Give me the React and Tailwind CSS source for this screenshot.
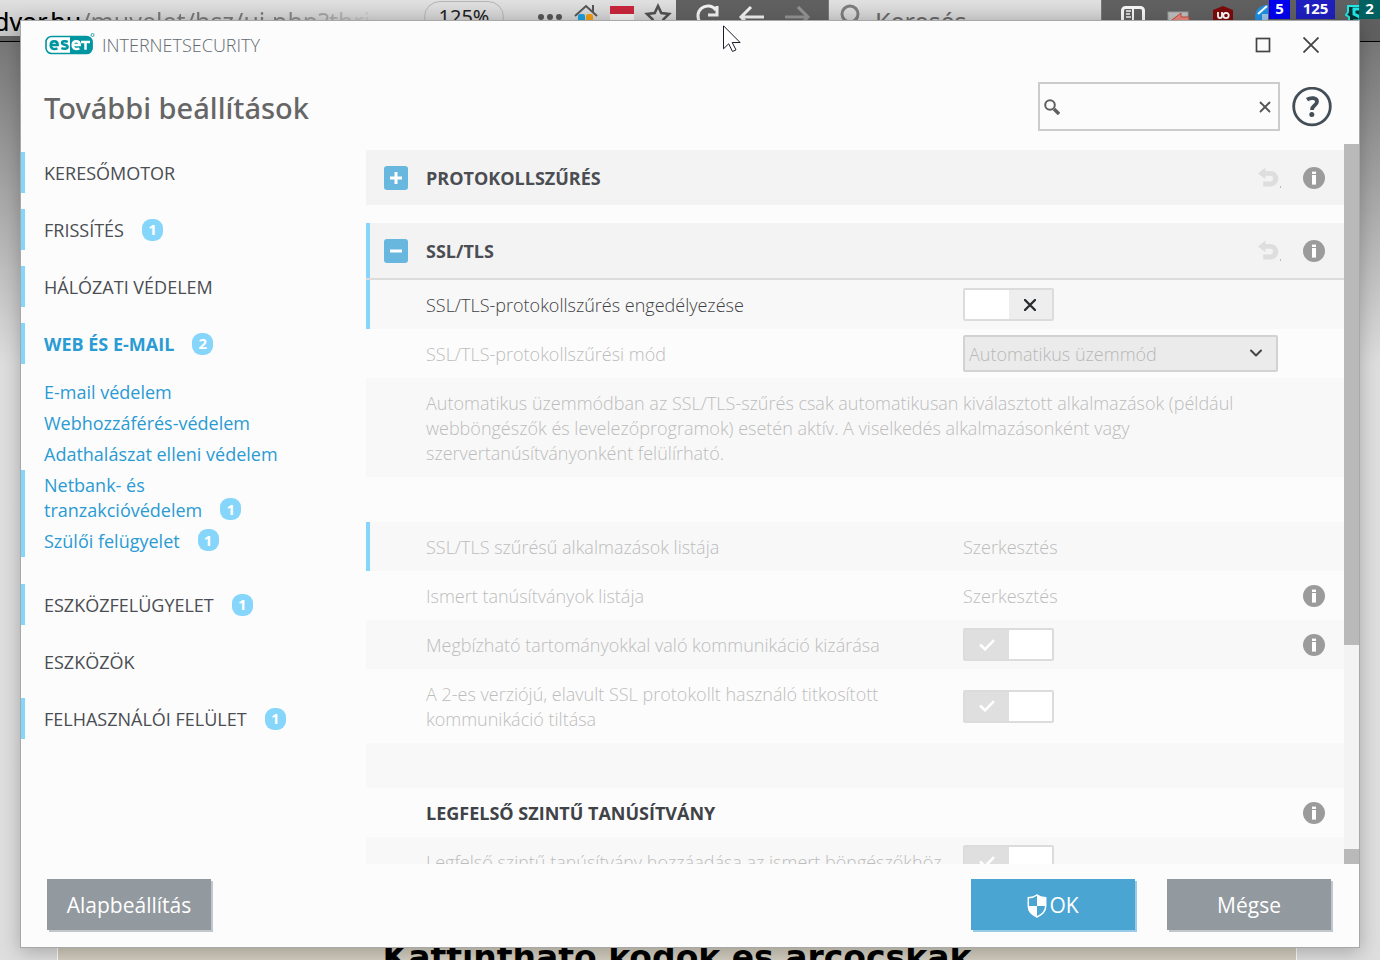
import { ChevronDown, X } from "lucide-react";

function CountBadge({ children }) {
  return (
    <span className="ml-[18px] flex h-[22px] w-[21px] shrink-0 items-center justify-center rounded-[9px] bg-[#86d5fb] text-[15px] font-bold text-white">
      {children}
    </span>
  );
}

function NavItem({ label, count, marked, active }) {
  return (
    <li
      className={`flex h-[41px] items-center border-l-4 pl-[19px] ${marked ? "border-[#86d5fb]" : "border-transparent"} ${active ? "mb-[13px]" : "mb-4"}`}
    >
      <a
        href="#"
        aria-current={active ? "page" : undefined}
        className={active ? "font-bold text-[#2a9bd3]" : "text-[#4a4d52]"}
      >
        {label}
      </a>
      {count && <CountBadge>{count}</CountBadge>}
    </li>
  );
}

function SubItem({ children, count, marked }) {
  return (
    <li
      className={`flex items-end border-l-4 py-[3px] pl-[19px] leading-[25px] text-[#2a9bd3] ${marked ? "border-[#86d5fb]" : "border-transparent"}`}
    >
      <a href="#">{children}</a>
      {count && (
        <span className="mb-[3px]">
          <CountBadge>{count}</CountBadge>
        </span>
      )}
    </li>
  );
}

function InfoButton() {
  return (
    <button type="button" aria-label="Információ" className="shrink-0">
      <svg viewBox="0 0 22 22" className="block size-[22px]">
        <circle cx="11" cy="11" r="11" fill="#9b9b9b" />
        <rect x="9" y="4.6" width="4" height="2.4" fill="#fff" />
        <rect x="9" y="8" width="4" height="9.6" fill="#fff" />
      </svg>
    </button>
  );
}

function UndoButton() {
  return (
    <button type="button" aria-label="Visszaállítás" className="shrink-0">
      <svg viewBox="0 0 23 22" className="block h-[22px] w-[23px]">
        <path d="M0 6.4 7.4.6v3.4h5.2a7.7 7.7 0 0 1 0 15.4H5.2v-5h7a2.7 2.7 0 0 0 0-5.6H7.4v3.4z" fill="#dedede" />
        <rect x="22" y="19" width="1" height="2" fill="#bbb" />
      </svg>
    </button>
  );
}

function SectionHeader({ title, open }) {
  return (
    <div
      className={`flex h-[55px] items-center border-l-4 bg-[#f3f3f3] pr-[19px] pl-3.5 ${open ? "border-[#86d5fb]" : "border-transparent"}`}
    >
      <button
        type="button"
        aria-expanded={!!open}
        aria-label={title}
        className="flex size-6 items-center justify-center rounded-[3px] bg-[#68b7df]"
      >
        <svg viewBox="0 0 12 12" className="size-3">
          <path d={open ? "M0 6h12" : "M0 6h12M6 0v12"} stroke="#fff" strokeWidth="3" />
        </svg>
      </button>
      <h2 className="ml-[18px] flex-1 font-bold text-[#4a4d52]">{title}</h2>
      <div className="flex items-center gap-[22px]">
        <UndoButton />
        <InfoButton />
      </div>
    </div>
  );
}

function Row({ children, shaded, marked, info, className = "" }) {
  return (
    <div
      className={`grid grid-cols-[minmax(0,1fr)_315px_66px] items-center border-l-4 pl-14 ${shaded ? "bg-[#f8f8f8]" : "bg-[#fcfcfc]"} ${marked ? "border-[#86d5fb]" : "border-transparent"} ${className}`}
    >
      {children}
      {info && (
        <div className="col-start-3 flex justify-end pr-[19px]">
          <InfoButton />
        </div>
      )}
    </div>
  );
}

function Toggle({ id, on, disabled }) {
  return (
    <label
      htmlFor={id}
      className="flex h-[33px] w-[91px] rounded-xs border-2 border-[#dcdcdc] bg-white"
    >
      <input id={id} type="checkbox" role="switch" defaultChecked={on} disabled={disabled} className="sr-only" />
      <span className={`flex flex-1 items-center justify-center ${on ? "bg-[#dfdfdf]" : "bg-white"}`}>
        {on && (
          <svg viewBox="0 0 16 12" className="h-3 w-4" fill="none" stroke="#fff" strokeWidth="2.6">
            <path d="M1 5.5 6 10.3 15 1.2" />
          </svg>
        )}
      </span>
      <span className={`flex flex-1 items-center justify-center ${on ? "bg-white" : "bg-[#eeeeee]"}`}>
        {!on && (
          <svg viewBox="0 0 12 12" className="size-3" fill="none" stroke="#2b2e31" strokeWidth="2.4" strokeLinecap="round">
            <path d="M1 1 11 11M11 1 1 11" />
          </svg>
        )}
      </span>
    </label>
  );
}

function ToggleRow({ id, children, on, disabled, className, ...row }) {
  return (
    <Row className={className} {...row}>
      <label htmlFor={id} className="pt-px pr-12 leading-[25px]">
        {children}
      </label>
      <Toggle id={id} on={on} disabled={disabled} />
    </Row>
  );
}

function EditRow({ children, ...row }) {
  return (
    <Row className="h-[49px] text-[#bcbcbc]" {...row}>
      <span>{children}</span>
      <a href="#" className="justify-self-start">
        Szerkesztés
      </a>
    </Row>
  );
}

function BrowserBackdrop() {
  return (
    <div aria-hidden="true" className="absolute inset-0 flex flex-col overflow-hidden bg-[#dedede]">
      <div className="flex h-[42px] shrink-0 items-start overflow-hidden border-b border-black bg-[#606060]">
        <div className="flex h-9 w-[676px] shrink-0 items-start bg-linear-to-b from-[#e0e0e0] to-[#c4c4c4] font-['Noto_Sans',sans-serif] text-[25px] leading-[42px] whitespace-nowrap">
          <div className="-ml-1.5 w-[430px] shrink-0 overflow-hidden bg-linear-to-r from-[#777777] from-65% to-transparent to-90% bg-clip-text text-transparent">
            <span className="text-black">dvor.hu</span>/muvelet/hsz/ui.php?thri
          </div>
          <span className="mt-px flex h-8 w-[80px] shrink-0 items-center justify-center rounded-full border border-[#b4b4b4] text-xl text-[#222222]">
            125%
          </span>
          <svg viewBox="0 0 140 36" className="ml-[33px] h-9 w-[140px] shrink-0">
            <g fill="#555">
              <circle cx="4" cy="17" r="3" />
              <circle cx="13" cy="17" r="3" />
              <circle cx="22" cy="17" r="3" />
            </g>
            <rect x="41" y="14" width="7" height="8" rx="2" fill="#1b9fdc" />
            <rect x="49" y="14" width="7" height="8" rx="2" fill="#f39c12" />
            <path d="M38 16 49 6l11 10M56 5v7" fill="none" stroke="#555" strokeWidth="2" />
            <rect x="73" y="6" width="24" height="8" fill="#c6263b" />
            <rect x="73" y="14" width="24" height="6" fill="#eee" />
            <rect x="73" y="20" width="24" height="8" fill="#477050" />
            <path
              d="m121 6 3.3 7 7.7 1-5.6 5.4 1.4 7.6-6.8-3.8-6.8 3.8 1.4-7.6-5.6-5.4 7.7-1z"
              fill="none"
              stroke="#505050"
              strokeWidth="2.6"
            />
          </svg>
        </div>
        <div className="w-[152px] shrink-0">
          <svg viewBox="0 0 152 36" className="h-9 w-[152px]" fill="none" stroke="#f0f0f0" strokeWidth="3">
            <path d="M39 23a10 10 0 1 1 1-13M41 6v9h-9" />
            <path d="M88 17H66M75 7 65 17l10 10" />
            <path d="M109 17h22M122 7l10 10-10 10" stroke="#939393" />
          </svg>
        </div>
        <div className="flex h-9 flex-1 items-start border-x border-[#777777] bg-linear-to-b from-[#e0e0e0] to-[#c4c4c4] font-['Noto_Sans',sans-serif] text-[25px] leading-[42px] text-[#666666]">
          <svg viewBox="0 0 24 36" className="ml-[9px] h-9 w-6" fill="none" stroke="#7c7c7c" strokeWidth="3">
            <circle cx="12" cy="14" r="8" />
            <path d="m18 20 5 6" />
          </svg>
          <span className="ml-[13px]">Keresés</span>
        </div>
        <div className="flex w-[278px] shrink-0 items-start font-['Noto_Sans',sans-serif] text-[15px] leading-4 font-bold text-white">
          <svg viewBox="0 0 166 36" className="h-9 w-[166px] shrink-0">
            <rect x="20.5" y="7.5" width="21" height="20" rx="3" fill="none" stroke="#f4f4f4" strokeWidth="3" />
            <path d="M31 8v20" stroke="#f4f4f4" strokeWidth="2" />
            <path d="M24 11h5M24 14h4M24 17h5" stroke="#f4f4f4" strokeWidth="1.6" />
            <rect x="66" y="12" width="20" height="14" fill="#bdbdbd" stroke="#9a9a9a" />
            <path d="m70 20 9-7v4h8v6h-8v4z" fill="#e9867a" stroke="#c44b3f" />
            <path d="m121 6 10 4v14l-10 8-10-8V10z" fill="#7c0a0a" />
            <path d="M116 12v4a2 2 0 0 0 4 0v-4" fill="none" stroke="#fff" strokeWidth="1.8" />
            <circle cx="124" cy="15.5" r="2.7" fill="none" stroke="#fff" strokeWidth="1.8" />
            <circle cx="165" cy="17" r="12" fill="#1d8fe0" />
            <path d="m156 14 9-8" stroke="#fff" strokeWidth="2" />
            <path d="M160 14h8v8h-8z" fill="#9cc6ea" />
          </svg>
          <span className="ml-px flex h-[19px] w-[21px] items-start justify-center bg-[#0000f0]">5</span>
          <span className="ml-1.5 flex h-[19px] w-[39px] items-start justify-center bg-[#1f1fbf]">125</span>
          <svg viewBox="0 0 24 32" className="ml-2.5 h-8 w-3.5" preserveAspectRatio="xMinYMin slice">
            <path d="M3 6h14v20H6l-2-3v-6l-3-2 2-3z" fill="#033" stroke="#20e6e6" strokeWidth="2" />
            <path d="M15 9H9v5l6 3v4H8" fill="none" stroke="#20e6e6" strokeWidth="3" />
          </svg>
          <span className="flex h-[19px] flex-1 items-start justify-center bg-[#006161]">2</span>
        </div>
      </div>
      <div className="flex flex-1 flex-col justify-end bg-linear-to-b from-[#777777] to-[#dedede] to-35% pr-[83px] pl-[57px]">
        <div className="h-4 border-x border-white bg-[#d3cec0] text-center font-['DejaVu_Sans',sans-serif] text-[33px] leading-7 font-bold whitespace-nowrap text-black">
          Kattintható kódok és arcocskák
        </div>
      </div>
    </div>
  );
}

function EsetLogo() {
  return (
    <svg viewBox="0 0 50 24" role="img" aria-label="ESET" className="h-6 w-[50px]">
      <rect x="1" y="3.5" width="46" height="17" rx="5.5" fill="#fff" stroke="#0096a1" strokeWidth="1.6" />
      <path d="M25 3.5h17A5.5 5.5 0 0 1 47.5 9v6a5.5 5.5 0 0 1-5.5 5.5H25z" fill="#0096a1" />
      <g fill="none" strokeWidth="2.5">
        <path d="M5.5 12h7.2c0-5-7-5-7 0 0 4.800 4.800 4.500 6.600 3.200" stroke="#0096a1" />
        <path d="M22.8 8.9c-2-.9-5.8-.9-5.8 1 0 2.4 5.6 1.4 5.6 3.9 0 2.4-4 2.5-6.2 1.2" stroke="#0096a1" />
        <path d="M27.5 12h7.2c0-5-7-5-7 0 0 4.800 4.800 4.500 6.600 3.200M36 8.900h9M40.500 9v7.700" stroke="#fff" />
      </g>
      <circle cx="47.5" cy="2" r="1.5" fill="none" stroke="#0096a1" strokeWidth=".8" />
    </svg>
  );
}

export default function App() {
  return (
    <div className="relative h-screen min-h-[600px] overflow-hidden px-5 pt-5 pb-3 font-['Open_Sans',sans-serif] text-lg">
      <BrowserBackdrop />

      <div
        role="dialog"
        aria-labelledby="dialog-title"
        className="relative flex h-full flex-col border border-[#a8a8a8] bg-[#fcfcfc] shadow-[0_4px_18px_rgba(0,0,0,0.25)]"
      >
        <div className="flex h-12 shrink-0 items-center pr-10 pl-6">
          <EsetLogo />
          <span className="ml-[7px] text-lg font-light text-[#636b71]">INTERNETSECURITY</span>
          <div className="ml-auto flex items-center gap-8 text-[#444444]">
            <button type="button" aria-label="Teljes méret">
              <svg viewBox="0 0 16 16" className="size-4" fill="none" stroke="currentColor" strokeWidth="1.7">
                <rect x="1.5" y="1.5" width="13" height="13" />
              </svg>
            </button>
            <button type="button" aria-label="Bezárás">
              <svg viewBox="0 0 16 16" className="size-4" stroke="currentColor" strokeWidth="1.8">
                <path d="M.5.5l15 15M15.5.5l-15 15" />
              </svg>
            </button>
          </div>
        </div>

        <header className="flex h-[75px] shrink-0 items-center pr-[27px] pl-[23px]">
          <h1 id="dialog-title" className="pt-0.5 font-['Noto_Sans',sans-serif] text-[29px] font-medium text-[#666666]">
            További beállítások
          </h1>
          <div className="ml-auto flex h-[49px] w-[242px] items-center border-2 border-[#cccccc] bg-[#fcfcfc] px-1">
            <svg viewBox="0 0 16 16" className="size-4 shrink-0" fill="none" stroke="#5f5f5f">
              <circle cx="6" cy="6" r="4.8" strokeWidth="2" />
              <path d="m10 10 5 5" strokeWidth="3.4" />
            </svg>
            <input type="text" aria-label="Keresés" className="h-full min-w-0 flex-1 bg-transparent px-2 outline-none" />
            <button type="button" aria-label="Keresés törlése" className="shrink-0 text-[#555555]">
              <X className="size-[18px]" strokeWidth={2.4} />
            </button>
          </div>
          <button type="button" aria-label="Súgó" className="ml-3 shrink-0">
            <svg viewBox="0 0 40 40" className="size-10" fill="none" stroke="#434e57">
              <circle cx="20" cy="19.5" r="18.3" strokeWidth="2.8" />
              <path d="M15 12.7c4-2.6 10-2.1 10 2 0 3.800-5 3.600-5 8.300" strokeWidth="3.8" />
              <circle cx="19.8" cy="27.5" r="2.5" fill="#434e57" stroke="none" />
            </svg>
          </button>
        </header>

        <div className="flex min-h-0 flex-1">
          <nav className="w-[345px] shrink-0 overflow-hidden pt-2">
            <ul>
              <NavItem label="KERESŐMOTOR" marked />
              <NavItem label="FRISSÍTÉS" count="1" marked />
              <NavItem label="HÁLÓZATI VÉDELEM" marked />
              <NavItem label="WEB ÉS E-MAIL" count="2" marked active />
              <li className="mb-[27px]">
                <ul>
                  <SubItem>E-mail védelem</SubItem>
                  <SubItem>Webhozzáférés-védelem</SubItem>
                  <SubItem>Adathalászat elleni védelem</SubItem>
                  <SubItem count="1" marked>
                    Netbank- és
                    <br />
                    tranzakcióvédelem
                  </SubItem>
                  <SubItem count="1" marked>
                    Szülői felügyelet
                  </SubItem>
                </ul>
              </li>
              <NavItem label="ESZKÖZFELÜGYELET" count="1" marked />
              <NavItem label="ESZKÖZÖK" />
              <NavItem label="FELHASZNÁLÓI FELÜLET" count="1" marked />
            </ul>
          </nav>

          <main className="min-w-0 flex-1 overflow-hidden pt-1.5 font-light">
            <SectionHeader title="PROTOKOLLSZŰRÉS" />
            <div className="h-[18px]" />
            <SectionHeader title="SSL/TLS" open />
            <div className="h-0.5 bg-[#dcdcdc]" />

            <ToggleRow id="ssl-enable" className="h-[49px] text-[#3f4246]" shaded marked>
              SSL/TLS-protokollszűrés engedélyezése
            </ToggleRow>
            <Row className="h-[49px] text-[#bcbcbc]">
              <label htmlFor="ssl-mode">SSL/TLS-protokollszűrési mód</label>
              <div className="relative">
                <select
                  id="ssl-mode"
                  disabled
                  className="h-[37px] w-full appearance-none rounded-xs border-2 border-[#d2d2d2] bg-[#ebebeb] pl-1 text-[#b8b8b8] opacity-100"
                >
                  <option>Automatikus üzemmód</option>
                </select>
                <ChevronDown
                  className="pointer-events-none absolute top-2 right-3 size-5 text-[#444444]"
                  strokeWidth={2.4}
                />
              </div>
            </Row>
            <div className="bg-[#f8f8f8] pt-[13px] pr-[100px] pb-[11px] pl-[60px] leading-[25px] text-[#bcbcbc]">
              <p>
                Automatikus üzemmódban az SSL/TLS-szűrés csak automatikusan kiválasztott alkalmazások (például
                webböngészők és levelezőprogramok) esetén aktív. A viselkedés alkalmazásonként vagy
                szervertanúsítványonként felülírható.
              </p>
            </div>
            <div className="h-[45px]" />
            <EditRow shaded marked>
              SSL/TLS szűrésű alkalmazások listája
            </EditRow>
            <EditRow info>Ismert tanúsítványok listája</EditRow>
            <ToggleRow id="trusted" className="h-[49px] text-[#bcbcbc]" shaded info on disabled>
              Megbízható tartományokkal való kommunikáció kizárása
            </ToggleRow>
            <ToggleRow id="sslv2" className="h-[74px] text-[#bcbcbc]" on disabled>
              A 2-es verziójú, elavult SSL protokollt használó titkosított kommunikáció tiltása
            </ToggleRow>
            <div className="h-[45px] bg-[#f8f8f8]" />
            <Row className="h-[49px] text-[#3f4246]" info>
              <h3 className="font-bold">LEGFELSŐ SZINTŰ TANÚSÍTVÁNY</h3>
            </Row>
            <ToggleRow id="root-cert" className="h-[49px] text-[#bcbcbc]" shaded on disabled>
              <span className="whitespace-nowrap">Legfelső szintű tanúsítvány hozzáadása az ismert böngészőkhöz</span>
            </ToggleRow>
          </main>

          <div aria-hidden="true" className="flex w-[15px] shrink-0 flex-col bg-[#f3f3f3]">
            <div className="flex-[501] bg-[#b9b9b9]" />
            <div className="flex-[204]" />
            <div className="h-[15px] shrink-0 bg-[#b9b9b9]" />
          </div>
        </div>

        <footer className="flex h-[83px] shrink-0 items-start gap-8 pt-[15px] pr-7 pl-[26px] text-[21px] text-white">
          <button type="button" className="mr-auto h-[51px] w-[164px] bg-[#92999f] pt-0.5 shadow-[2px_2px_0_#c3c6cb]">
            Alapbeállítás
          </button>
          <button
            type="button"
            className="flex h-[51px] w-[164px] items-center justify-center gap-0.5 bg-[#4ba5d3] pt-0.5 shadow-[2px_2px_0_#97cbe6]"
          >
            <svg viewBox="0 0 20 24" className="h-6 w-5">
              <path d="M10 1c2.5 2 5.5 2.6 8.7 2.8V12c0 5-3.4 8.6-8.7 11C4.7 20.6 1.3 17 1.3 12V3.8C4.5 3.6 7.5 3 10 1z" fill="none" stroke="#fff" strokeWidth="1.5" />
              <path d="M10 1c2.5 2 5.5 2.6 8.7 2.8V12H10zM10 12v11C4.7 20.6 1.3 17 1.3 12z" fill="#fff" />
            </svg>
            OK
          </button>
          <button type="button" className="h-[51px] w-[164px] bg-[#92999f] pt-0.5 shadow-[2px_2px_0_#c3c6cb]">
            Mégse
          </button>
        </footer>
      </div>

      <svg aria-hidden="true" viewBox="0 0 18 27" className="pointer-events-none absolute top-[25px] left-[723px] h-[27px] w-[18px]">
        <path d="M.5.8v23l5.2-5 3.8 7.7 3.5-1.6-3.8-7.4h7.9z" fill="#fff" stroke="#1c1c28" />
      </svg>
    </div>
  );
}
